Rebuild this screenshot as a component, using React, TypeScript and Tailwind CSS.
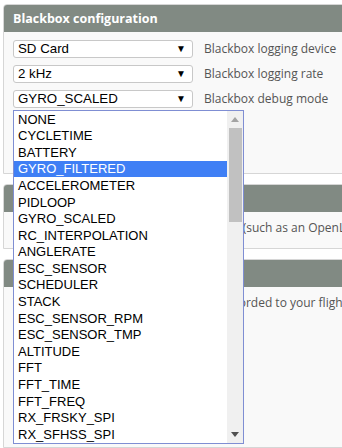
const OPTIONS = [
  "NONE",
  "CYCLETIME",
  "BATTERY",
  "GYRO_FILTERED",
  "ACCELEROMETER",
  "PIDLOOP",
  "GYRO_SCALED",
  "RC_INTERPOLATION",
  "ANGLERATE",
  "ESC_SENSOR",
  "SCHEDULER",
  "STACK",
  "ESC_SENSOR_RPM",
  "ESC_SENSOR_TMP",
  "ALTITUDE",
  "FFT",
  "FFT_TIME",
  "FFT_FREQ",
  "RX_FRSKY_SPI",
  "RX_SFHSS_SPI",
];

const SELECTED = "GYRO_FILTERED";

/** Closed select box + its label, as in the config rows. */
function SelectRow({ value, label }: { value: string; label: string }) {
  return (
    <div className="flex items-center">
      <div className="flex h-[18px] w-[180px] items-center justify-between rounded-[3px] border border-[#c8c8c8] bg-white pl-[4px] pr-[6px] font-['Liberation_Sans',Arial,sans-serif] text-[13.3px] text-black">
        <span>{value}</span>
        <span className="text-[10px] leading-none">▼</span>
      </div>
      <span className="ml-[11px] text-[12px] text-[#555]">{label}</span>
    </div>
  );
}

function Panel({
  title,
  children,
  bodyClass,
}: {
  title: string;
  children?: React.ReactNode;
  bodyClass: string;
}) {
  return (
    <div className="w-[400px] overflow-hidden rounded-t-[4px] border border-[#d6d6d6] bg-[#f9f9f9]">
      <div className="flex h-[27px] items-center bg-[#818a83] px-[9px] pt-[2px] text-[12.5px] font-bold text-white">
        {title}
      </div>
      <div className={bodyClass}>{children}</div>
    </div>
  );
}

export default function App() {
  return (
    <div className="relative h-[448px] w-[342px] overflow-hidden bg-white pl-[3px] pt-[4px] font-['Open_Sans',sans-serif]">
      <Panel title="Blackbox configuration" bodyClass="flex h-[141px] flex-col gap-[7px] px-[9px] pt-[8px]">
        <SelectRow value="SD Card" label="Blackbox logging device" />
        <SelectRow value="2 kHz" label="Blackbox logging rate" />
        <SelectRow value="GYRO_SCALED" label="Blackbox debug mode" />
      </Panel>

      <div className="mt-[10px]">
        <Panel title="Serial port logging" bodyClass="h-[36px] whitespace-nowrap pl-[9px] pt-[7px] text-[12px] leading-[18px] text-[#555]">
          Data is saved to an external serial device (such as an OpenLog or compatible)
        </Panel>
      </div>

      <div className="mt-[10px]">
        <Panel title="Onboard dataflash" bodyClass="h-[160px] whitespace-nowrap pl-[9px] pt-[7px] text-[12px] leading-[18px] text-[#555]">
          When enabled, blackbox data can be recorded to your flight controller's onboard dataflash chip.
        </Panel>
      </div>

      {/* Open dropdown list of the debug mode select */}
      <div className="absolute left-[13px] top-[110px] flex h-[334px] w-[231px] border border-[#7f8ed3] bg-white font-['Liberation_Sans',Arial,sans-serif] text-[13px] text-black">
        <ul className="flex-1">
          {OPTIONS.map((o) => (
            <li
              key={o}
              className={
                o === SELECTED
                  ? "flex h-[16.6px] items-center bg-[#3f7ff5] pl-[4px] text-white"
                  : "flex h-[16.6px] items-center pl-[4px]"
              }
            >
              {o}
            </li>
          ))}
        </ul>
        <div className="relative w-[16px] bg-[#f0f0f0]">
          <svg className="absolute left-[4px] top-[6px]" width="8" height="5" viewBox="0 0 8 5">
            <path d="M0 5 L4 0 L8 5 Z" fill="#a3a3a3" />
          </svg>
          <div className="absolute left-[2px] top-[17px] h-[94px] w-[13px] bg-[#c1c1c1]" />
          <svg className="absolute bottom-[6px] left-[4px]" width="8" height="5" viewBox="0 0 8 5">
            <path d="M0 0 L8 0 L4 5 Z" fill="#505050" />
          </svg>
        </div>
      </div>
    </div>
  );
}
